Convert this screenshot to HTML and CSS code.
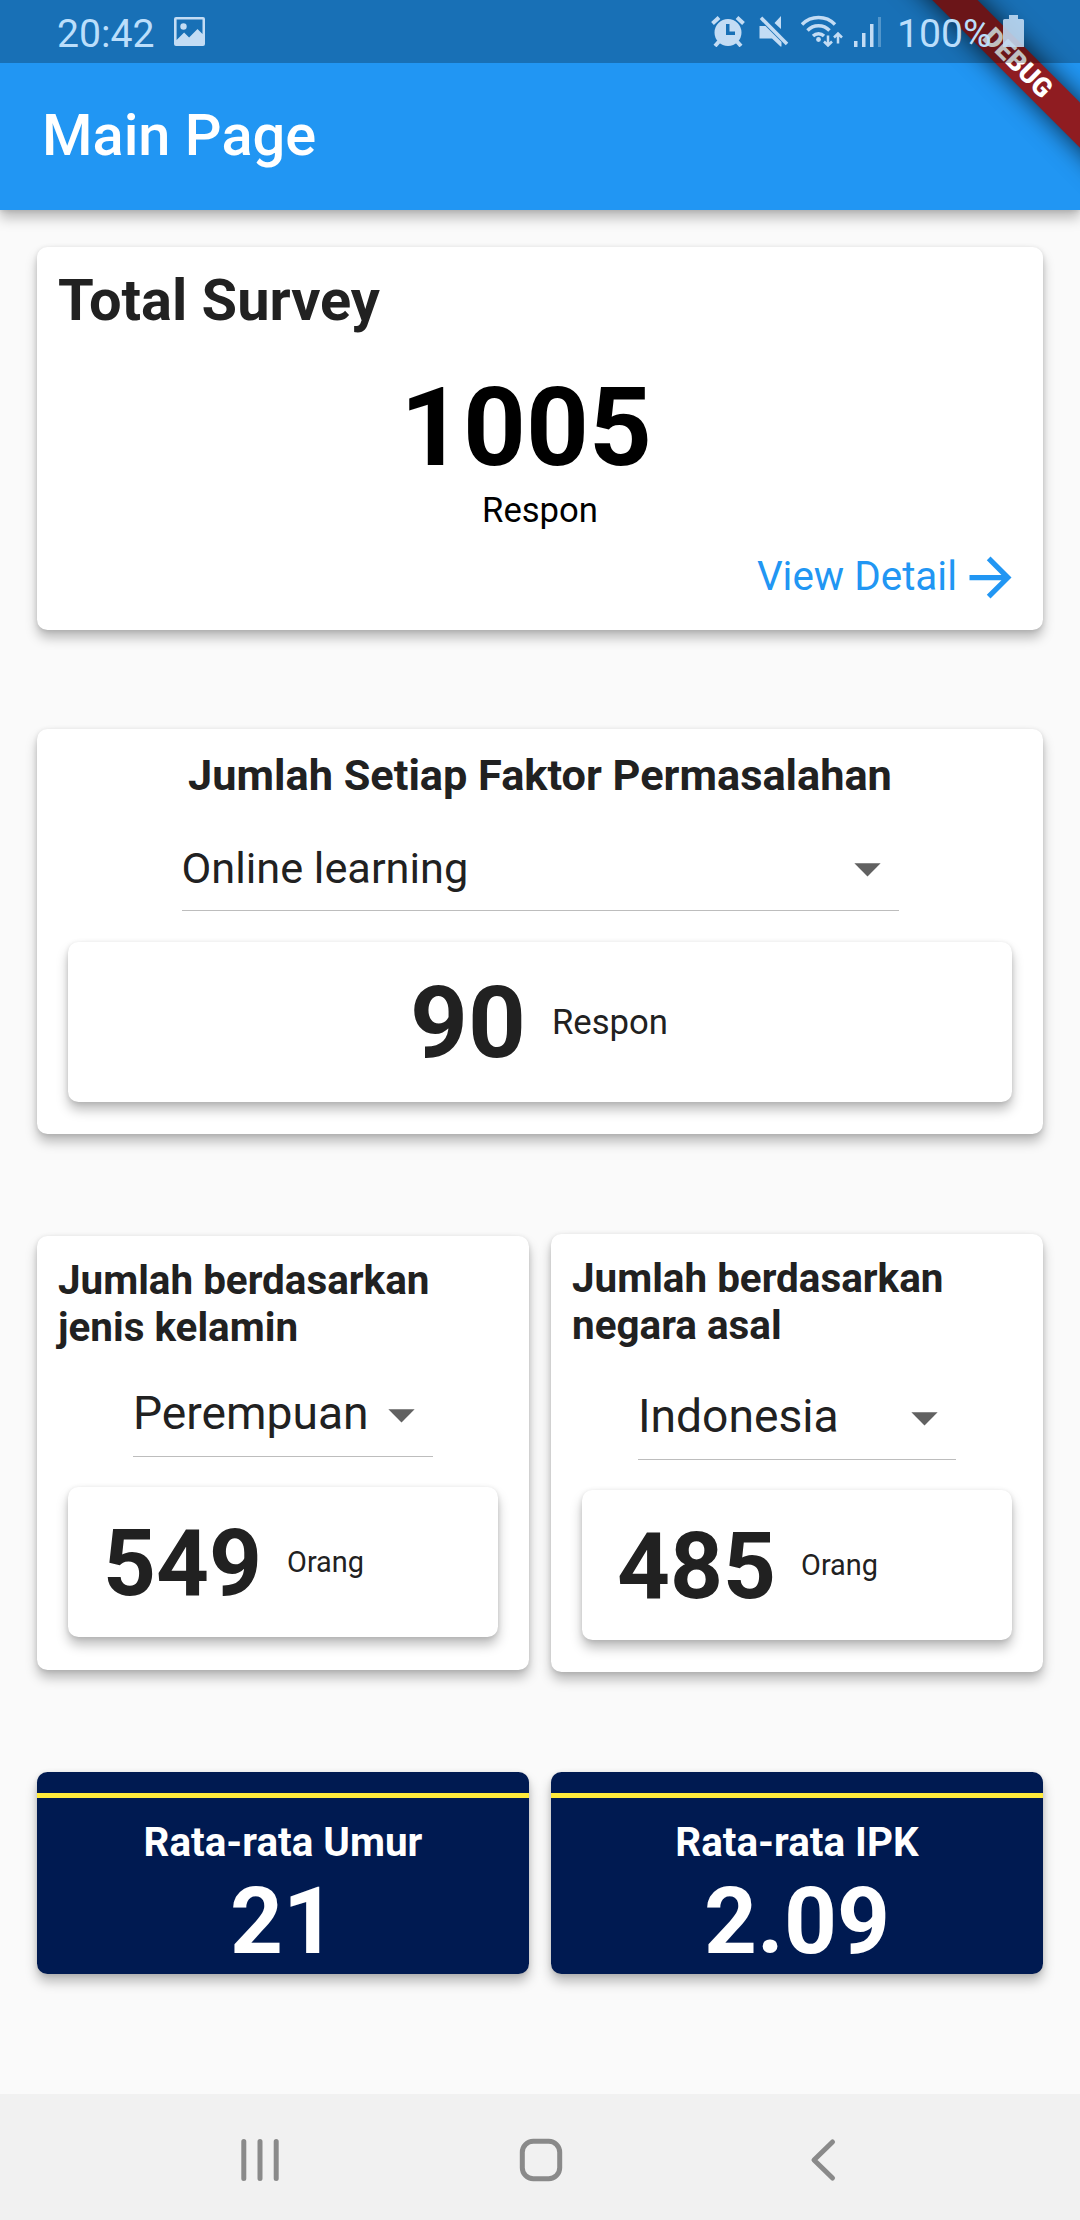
FILE: index.html
```html
<!DOCTYPE html>
<html lang="id">
<head>
<meta charset="utf-8">
<title>Main Page</title>
<link rel="stylesheet" href="styles.css">
</head>
<body>
<div class="screen">
  <header class="header">
    <div class="status">
      <span class="clock">20:42</span>
      <svg class="icon-picture" width="31" height="29" viewBox="0 0 31 29"><path fill-rule="evenodd" d="M2 0h27a2 2 0 0 1 2 2v25a2 2 0 0 1-2 2H2a2 2 0 0 1-2-2V2a2 2 0 0 1 2-2zM2.600 2.600V23l7.500-7.500 5 5L23.500 12l5 5V2.600z"/><circle cx="9.500" cy="9.500" r="3.200"/></svg>
      <div class="status-icons">
        <svg class="icon-alarm" width="34" height="31" viewBox="0 0 34 31"><path fill-rule="evenodd" d="M17 3a13.500 13.500 0 1 1 0 27 13.500 13.500 0 0 1 0-27zM15 8v11h9v-3.500h-5.500V8z"/><path class="line" stroke-width="4" d="M1.500 7.500l6.500-6M32.500 7.500l-6.500-6M4 30l4-4.500M30 30l-4-4.500"/></svg>
        <svg class="icon-mute" width="30" height="31" viewBox="0 0 30 31"><path d="M.5 10h6l16 16v4.500h-1L13 22.500H.5zM22 0v13l-6.500-6z"/><path class="line" stroke-width="3.600" d="M2 1.800L28 28"/></svg>
        <svg class="icon-wifi" width="42" height="32" viewBox="0 0 42 32"><path class="line" stroke-width="3.400" d="M1 9.500a23 23 0 0 1 33 0M6.500 15.500a15 15 0 0 1 22 0M12 21a8 8 0 0 1 11 0"/><circle cx="17.500" cy="24.500" r="2.400"/><path class="line" stroke-width="2.500" d="M27 20.500v9M23 26.500l4 4 4-4M37 28.500v-9M33 22.500l4-4 4 4"/></svg>
        <svg class="icon-signal" width="28" height="31" viewBox="0 0 28 31"><rect x="0" y="24" width="3.500" height="6"/><rect x="8" y="16" width="3.500" height="14"/><rect x="16" y="7" width="3.500" height="23"/><rect x="24" y="0" width="3" height="30" opacity=".35"/></svg>
        <span class="battery-level">100%</span>
        <svg class="icon-battery" width="21" height="32" viewBox="0 0 21 32"><path d="M6 0h9v4h4.500a1.500 1.500 0 0 1 1.500 1.500V32H0V5.500A1.500 1.500 0 0 1 1.500 4H6z"/></svg>
      </div>
    </div>
    <h1 class="title">Main Page</h1>
  </header>
  <div class="banner">DEBUG</div>

  <main class="content">
    <section class="card survey">
      <h2 class="survey-title">Total Survey</h2>
      <div class="survey-count">1005</div>
      <div class="survey-unit">Respon</div>
      <a class="detail-link">View Detail
        <svg width="63" height="63" viewBox="0 0 24 24"><path d="M12 4l-1.410 1.410L16.170 11H4v2h12.170l-5.580 5.590L12 20l8-8z"/></svg>
      </a>
    </section>

    <section class="card factor">
      <h2 class="factor-title">Jumlah Setiap Faktor Permasalahan</h2>
      <div class="dropdown">Online learning
        <svg width="63" height="63" viewBox="0 0 24 24"><path d="M7 10l5 5 5-5z"/></svg>
      </div>
      <div class="card result">
        <span class="result-count">90</span>
        <span class="result-unit">Respon</span>
      </div>
    </section>

    <div class="pair groups">
      <section class="card group gender">
        <h3 class="group-title">Jumlah berdasarkan jenis kelamin</h3>
        <div class="dropdown">Perempuan
          <svg width="63" height="63" viewBox="0 0 24 24"><path d="M7 10l5 5 5-5z"/></svg>
        </div>
        <div class="card result">
          <span class="result-count">549</span>
          <span class="result-unit">Orang</span>
        </div>
      </section>
      <section class="card group country">
        <h3 class="group-title">Jumlah berdasarkan negara asal</h3>
        <div class="dropdown">Indonesia
          <svg width="63" height="63" viewBox="0 0 24 24"><path d="M7 10l5 5 5-5z"/></svg>
        </div>
        <div class="card result">
          <span class="result-count">485</span>
          <span class="result-unit">Orang</span>
        </div>
      </section>
    </div>

    <div class="pair averages">
      <section class="card average">
        <h3 class="average-title">Rata-rata Umur</h3>
        <div class="average-value">21</div>
      </section>
      <section class="card average">
        <h3 class="average-title">Rata-rata IPK</h3>
        <div class="average-value">2.09</div>
      </section>
    </div>
  </main>

  <nav class="navbar">
    <svg width="40" height="44" viewBox="0 0 40 44"><path d="M3.800 3.500v37M20 3.500v37M36.200 3.500v37"/></svg>
    <svg width="44" height="44" viewBox="0 0 44 44"><rect x="3.300" y="3.300" width="37.400" height="37.400" rx="11"/></svg>
    <svg width="28" height="44" viewBox="0 0 28 44"><path d="M23.500 4L5 22l18.500 18"/></svg>
  </nav>
</div>
</body>
</html>
```
FILE: styles.css
```css
* { box-sizing: border-box; }
body {
  margin: 0;
  background: #fafafa;
  color: #212121;
  font-family: Roboto, sans-serif;
}
h1, h2, h3 { margin: 0; }
svg { display: block; flex: none; }
.screen {
  position: relative;
  display: flex;
  flex-direction: column;
  width: 1080px;
  height: 2220px;
  overflow: hidden;
}

/* Header */
.header {
  height: 210px;
  background: #2196f3;
  box-shadow: 0 8px 12px rgba(0, 0, 0, .25), 0 1px 5px rgba(0, 0, 0, .12);
}
.status {
  position: relative;
  z-index: 2;
  display: flex;
  align-items: flex-start;
  height: 63px;
  padding: 0 56px 0 57px;
  background: rgba(0, 0, 0, .25);
  color: #bbdefb;
  font-size: 39.2px;
  line-height: 68px;
}
.status svg { fill: #c3dcf4; }
.status .line { fill: none; stroke: #c3dcf4; }
.clock { width: 116.5px; }
.icon-picture { margin-top: 17px; }
.status-icons { display: flex; margin-left: auto; }
.icon-alarm { margin: 16px 14px 0 0; }
.icon-mute { margin: 16px 12px 0 0; }
.icon-wifi { margin: 15px 11px 0 0; }
.icon-signal { margin: 16.5px 15px 0 0; }
.battery-level { width: 106px; }
.icon-battery { margin-top: 15px; opacity: .88; }
.title {
  padding-left: 42px;
  color: #fff;
  font-size: 57.75px;
  font-weight: 500;
  line-height: 145px;
}
.banner {
  position: absolute;
  z-index: 1;
  top: 46.5px;
  left: 868px;
  width: 300px;
  height: 31.5px;
  background: #8f1c21;
  box-shadow: 0 0 26px rgba(0, 0, 0, .75);
  color: #fff;
  font-size: 26.8px;
  font-weight: 900;
  line-height: 32px;
  text-align: center;
  transform: rotate(45deg);
}

/* Cards */
.content { flex: 1; padding: 37px 37px 0; }
.card {
  border-radius: 10.5px;
  background: #fff;
  box-shadow: 0 8px 12px rgba(0, 0, 0, .25), 0 1px 5px rgba(0, 0, 0, .12);
}
.survey {
  height: 383px;
  padding: 19px 21px 0;
}
.survey-title { font-size: 57.75px; line-height: 68px; }
.survey-count {
  margin-top: 31.5px;
  padding-right: 28px;
  color: #000;
  font-size: 109.7px;
  font-weight: 700;
  line-height: 124px;
  text-align: center;
}
.survey-unit {
  color: #000;
  font-size: 34.65px;
  line-height: 41px;
  text-align: center;
}
.detail-link {
  display: flex;
  justify-content: flex-end;
  gap: 2px;
  margin-top: 15px;
  color: #2196f3;
  font-size: 40.4px;
  line-height: 62px;
}
.detail-link svg { fill: #2196f3; }
.factor {
  height: 405px;
  margin-top: 99px;
  padding: 21px 31px 0;
}
.factor-title { font-size: 43.3px; line-height: 51px; text-align: center; }
.dropdown {
  display: flex;
  justify-content: space-between;
  padding-bottom: 10px;
  border-bottom: 1px solid #bdbdbd;
  line-height: 63px;
}
.dropdown svg { fill: #616161; }
.factor .dropdown { margin: 36px 113.5px 0; font-size: 43.3px; }
.result { display: flex; align-items: center; }
.result-count { font-weight: 700; }
.factor .result {
  justify-content: center;
  gap: 26px;
  height: 160px;
  margin-top: 31px;
  padding-right: 2px;
  font-size: 34.65px;
}
.factor .result-count { padding-top: 1px; font-size: 101px; }

.pair { display: grid; grid-template-columns: 1fr 1fr; gap: 22px; }
.groups { align-items: center; margin-top: 99.5px; }
.group { padding: 21px 31px 0; }
.group-title {
  margin: 0 -10px;
  padding-right: 40px;
  font-size: 40.4px;
  line-height: 47px;
}
.group .dropdown { width: 300px; margin: 32px auto 0; font-size: 46.2px; line-height: 61px; }
.group .result {
  gap: 25px;
  height: 150px;
  margin-top: 30px;
  padding-left: 35px;
  font-size: 28.875px;
}
.group .result-count { padding-top: 3px; font-size: 92.4px; }
.gender { height: 433.5px; }
.country { height: 438.5px; }
.country .dropdown { width: 318px; margin-top: 37px; }

.averages { margin-top: 100px; }
.average {
  height: 202px;
  padding-top: 21px;
  background: #001a51;
  color: #fff;
  text-align: center;
}
.average-title {
  padding-top: 21px;
  border-top: 5px solid #ffeb3b;
  font-size: 40.4px;
  line-height: 47px;
}
.average-value {
  margin-top: 2px;
  font-size: 92.4px;
  font-weight: 700;
  line-height: 108px;
}

/* System navigation */
.navbar {
  display: grid;
  grid-template-columns: 279.5px 270px 1fr;
  align-items: center;
  height: 126px;
  padding: 6px 0 0 239.5px;
  background: #f1f1f1;
}
.navbar svg { fill: none; stroke: #8a8a8a; stroke-width: 5; stroke-linecap: round; stroke-linejoin: round; }
.navbar svg:last-child { margin-left: 20px; }
```
